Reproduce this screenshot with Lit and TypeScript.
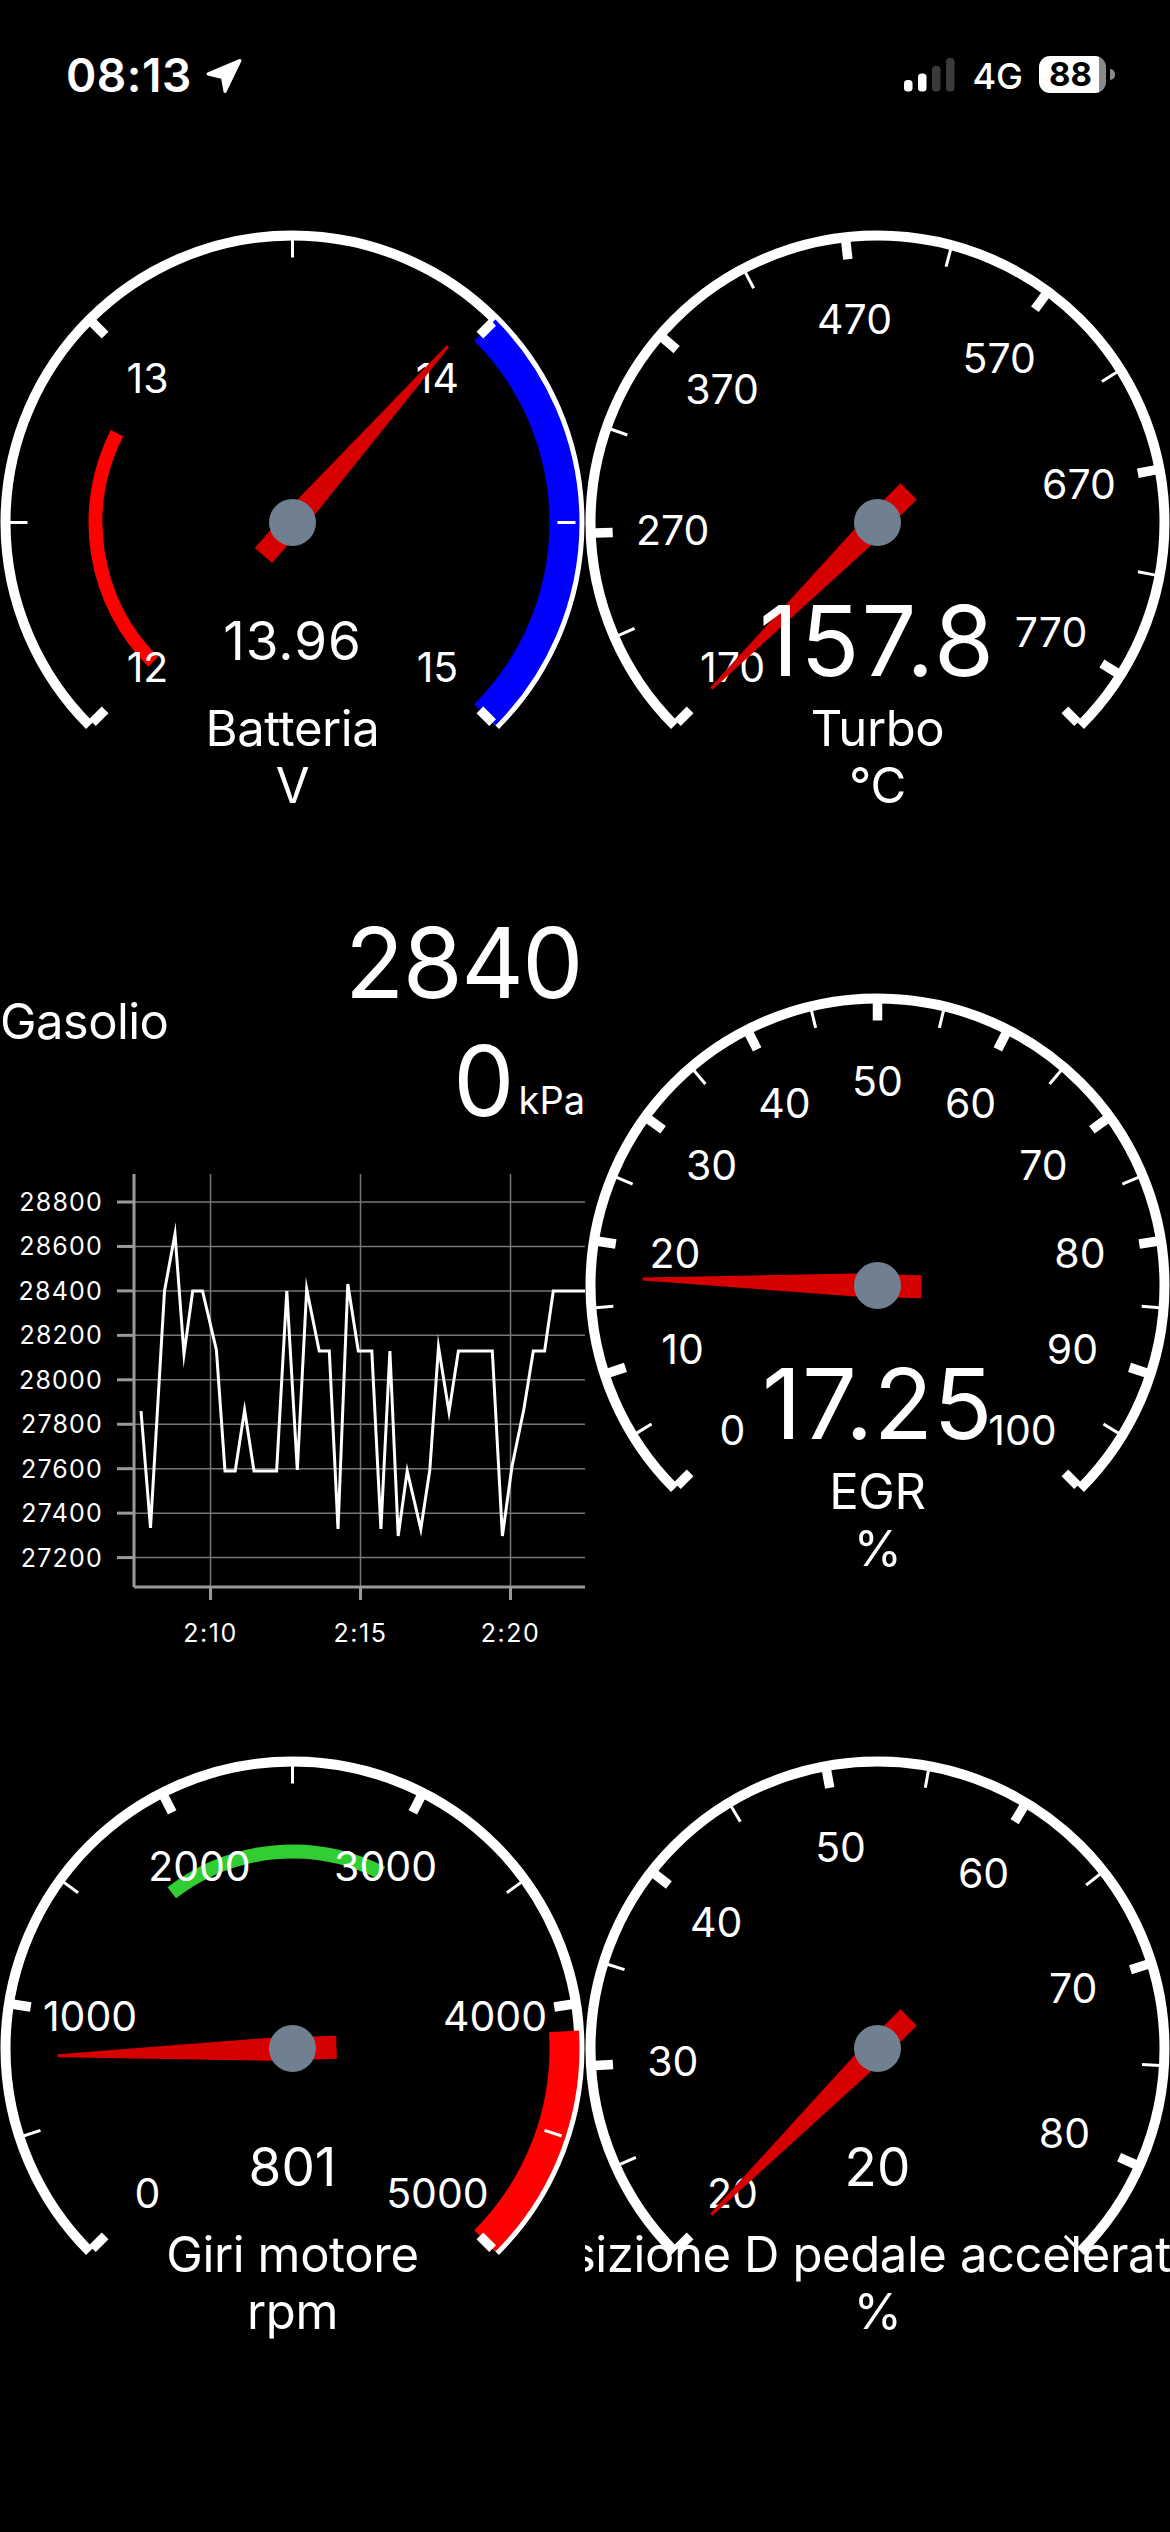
import { LitElement, html, svg, css } from 'lit';
import { customElement } from 'lit/decorators.js';

interface Zone {
  from: number;
  to: number;
  radius: number;
  width: number;
  color: string;
}

interface Gauge {
  title: string;
  unit: string;
  min: number;
  max: number;
  step: number;
  value: number;
  display: string;
  tracking?: number;
  big?: boolean;
  endTick?: boolean;
  zones?: Zone[];
}

const CX = 292.5;
const CY = 292.5;
const START = 135;
const SWEEP = 270;

const GAUGES: Gauge[] = [
  {
    title: 'Batteria',
    unit: 'V',
    min: 12,
    max: 15,
    step: 1,
    value: 13.96,
    display: '13.96',
    tracking: 1,
    zones: [
      { from: 12, to: 12.8, radius: 197, width: 14, color: '#ff0000' },
      { from: 14, to: 15, radius: 272, width: 30, color: '#0000ff' },
    ],
  },
  {
    title: 'Turbo',
    unit: '°C',
    min: 170,
    max: 800,
    step: 100,
    value: 170,
    display: '157.8',
    tracking: 2,
    big: true,
    endTick: true,
  },
  {
    title: 'EGR',
    unit: '%',
    min: 0,
    max: 100,
    step: 10,
    value: 17.25,
    display: '17.25',
    tracking: 0.5,
    big: true,
  },
  {
    title: 'Giri motore',
    unit: 'rpm',
    min: 0,
    max: 5000,
    step: 1000,
    value: 801,
    display: '801',
    zones: [
      { from: 1800, to: 3000, radius: 197, width: 14, color: '#32cd32' },
      { from: 4100, to: 5000, radius: 272, width: 30, color: '#ff0000' },
    ],
  },
  {
    title: 'Posizione D pedale acceleratore',
    unit: '%',
    min: 20,
    max: 85,
    step: 10,
    value: 20,
    display: '20',
  },
];

// fuel pressure samples, chart coordinates
const SAMPLES = [
  [141, 261], [150.5, 378], [164.5, 141], [175, 84], [184, 204], [192.7, 141], [202.5, 141],
  [216.4, 200], [225, 321], [235.2, 321], [244.6, 260], [254, 321], [276.6, 321], [286.8, 141],
  [297.3, 320], [306.7, 139], [319.2, 201], [329.3, 201], [338, 379], [347.8, 134], [358.3, 201],
  [371.8, 201], [380.9, 379], [389.9, 201], [398.2, 386], [407.2, 321], [420.8, 379], [429.8, 320],
  [438.5, 197], [449, 262], [458.4, 201], [492.3, 201], [502.4, 386], [511.9, 317], [523.9, 259],
  [533.3, 201], [544.6, 201], [553.3, 141], [590, 141],
];

const Y_TICKS = [28800, 28600, 28400, 28200, 28000, 27800, 27600, 27400, 27200];
const X_TICKS = [
  { x: 210.5, label: '2:10' },
  { x: 360.5, label: '2:15' },
  { x: 510.5, label: '2:20' },
];

function polar(angle: number, r: number) {
  const rad = (angle * Math.PI) / 180;
  return { x: CX + r * Math.cos(rad), y: CY + r * Math.sin(rad) };
}

function arcPath(from: number, to: number, r: number) {
  const a = polar(from, r);
  const b = polar(to, r);
  const large = to - from > 180 ? 1 : 0;
  return `M${a.x} ${a.y}A${r} ${r} 0 ${large} 1 ${b.x} ${b.y}`;
}

function renderGauge(g: Gauge) {
  const angleOf = (v: number) => START + ((v - g.min) / (g.max - g.min)) * SWEEP;
  const majors: number[] = [];
  const minors: number[] = [];
  for (let v = g.min; v <= g.max; v += g.step) {
    majors.push(v);
    if (v + g.step / 2 <= g.max) minors.push(v + g.step / 2);
  }
  const tick = (angle: number, cls: string) => {
    const a = polar(angle, 283);
    const b = polar(angle, 265);
    return svg`<line class=${cls} x1=${a.x} y1=${a.y} x2=${b.x} y2=${b.y}></line>`;
  };
  const needle = angleOf(g.value);

  return html`
    <svg class="gauge" width="585" height="600" viewBox="0 0 585 600">
      <path class="ring" d=${arcPath(START, START + SWEEP, 287)}></path>
      ${(g.zones ?? []).map(
        (z) => svg`<path
          d=${arcPath(angleOf(z.from), angleOf(z.to), z.radius)}
          fill="none"
          stroke=${z.color}
          stroke-width=${z.width}
        ></path>`
      )}
      ${minors.map((v) => tick(angleOf(v), 'minor'))}
      ${majors.map((v) => tick(angleOf(v), 'major'))}
      ${g.endTick ? tick(START + SWEEP, 'major') : ''}
      ${majors.map((v) => {
        const p = polar(angleOf(v), 205);
        return svg`<text class="scale" x=${p.x} y=${p.y + 15}>${v}</text>`;
      })}
      <g transform="rotate(${needle} ${CX} ${CY})">
        <polygon
          class="needle"
          points="${CX - 44},${CY - 11.5} ${CX + 22},${CY - 11.5} ${CX + 235},${CY - 1.5} ${CX + 235},${CY + 1.5} ${CX + 22},${CY + 11.5} ${CX - 44},${CY + 11.5}"
        ></polygon>
      </g>
      <circle class="hub" cx=${CX} cy=${CY} r="23.5"></circle>
      <text
        class=${g.big ? 'value big' : 'value'}
        letter-spacing=${g.tracking ?? 0}
        x=${CX}
        y=${CY + (g.big ? 153 : 137)}
      >${g.display}</text>
      <text class="caption" x=${CX} y=${CY + 223}>${g.title}</text>
      <text class="caption" x=${CX} y=${CY + 280.5}>${g.unit}</text>
    </svg>
  `;
}

function renderChart() {
  const yOf = (i: number) => 52 + i * 44.45;
  return html`
    <svg class="chart" width="585" height="510" viewBox="0 0 585 510">
      ${Y_TICKS.map(
        (t, i) => svg`
          <line class="grid" x1="134" x2="585" y1=${yOf(i)} y2=${yOf(i)}></line>
          <line class="axis" x1="117" x2="134" y1=${yOf(i)} y2=${yOf(i)}></line>
          <text class="y-label" x="103" y=${yOf(i) + 9}>${t}</text>
        `
      )}
      ${X_TICKS.map(
        (t) => svg`
          <line class="grid" x1=${t.x} x2=${t.x} y1="24" y2="437"></line>
          <line class="axis" x1=${t.x} x2=${t.x} y1="437" y2="450"></line>
          <text class="x-label" x=${t.x} y="492">${t.label}</text>
        `
      )}
      <line class="axis" x1="134" x2="134" y1="24" y2="437"></line>
      <line class="axis" x1="134" x2="585" y1="437" y2="437"></line>
      <polyline class="trace" points=${SAMPLES.map((p) => p.join(',')).join(' ')}></polyline>
    </svg>
  `;
}

@customElement('app-root')
export class AppRoot extends LitElement {
  static styles = css`
    :host {
      display: block;
      width: 1170px;
      height: 2532px;
      overflow: hidden;
      background: #000;
      color: #fff;
      font-family: Inter, 'Liberation Sans', Arial, sans-serif;
    }

    .status {
      height: 230px;
      box-sizing: border-box;
      padding: 55px 55px 0 66px;
      display: flex;
      justify-content: space-between;
      align-items: flex-start;
    }

    .status-left,
    .status-right {
      display: flex;
      align-items: center;
      height: 38px;
    }

    .clock {
      font-size: 46px;
      font-weight: 600;
      line-height: 38px;
      letter-spacing: 0.5px;
      margin-top: 2px;
    }

    .arrow {
      margin-left: 13px;
      margin-top: 4px;
    }

    .bars {
      display: block;
      margin-right: 17px;
      margin-top: 1px;
    }

    .network {
      font-size: 36px;
      font-weight: 500;
      line-height: 38px;
      margin-right: 16px;
      margin-top: 4px;
    }

    .battery {
      width: 67px;
      height: 37px;
      border-radius: 11px;
      background: linear-gradient(90deg, #fff 90%, #8a8a8a 90%);
      color: #000;
      font-size: 33px;
      font-weight: 700;
      line-height: 37px;
      text-indent: 10px;
    }

    .battery-cap {
      width: 5px;
      height: 11px;
      margin-left: 4px;
      margin-top: 1px;
      border-radius: 0 6px 6px 0;
      background: #8a8a8a;
    }

    .row {
      display: flex;
      width: 1170px;
    }

    .row-top {
      margin-bottom: 63px;
    }

    .row-mid {
      height: 863px;
    }

    .row-mid .gauge {
      margin-top: 100px;
    }

    .gauge,
    .chart {
      display: block;
      flex: none;
    }

    .panel {
      width: 585px;
      flex: none;
    }

    .panel-head {
      height: 257px;
      display: flex;
      justify-content: space-between;
      align-items: flex-start;
    }

    .panel-name {
      margin-top: 100px;
      font-size: 49px;
      line-height: 58px;
      letter-spacing: -0.6px;
    }

    .panel-values {
      padding-top: 11px;
      text-align: right;
      font-size: 97px;
      line-height: 118px;
    }

    .panel-top {
      letter-spacing: -1.5px;
      padding-right: 3px;
    }

    .panel-unit {
      font-size: 38px;
      vertical-align: 2px;
      margin-left: 4px;
    }

    .ring {
      fill: none;
      stroke: #fff;
      stroke-width: 10;
    }

    .major {
      stroke: #fff;
      stroke-width: 9.5;
    }

    .minor {
      stroke: #fff;
      stroke-width: 3;
    }

    .scale {
      fill: #fff;
      font-size: 41px;
      text-anchor: middle;
    }

    .needle {
      fill: #d60000;
    }

    .hub {
      fill: #708090;
    }

    .value {
      fill: #fff;
      font-size: 53px;
      text-anchor: middle;
    }

    .value.big {
      font-size: 97px;
    }

    .caption {
      fill: #fff;
      font-size: 49px;
      letter-spacing: -0.4px;
      text-anchor: middle;
    }

    .grid {
      stroke: #777;
      stroke-width: 1.5;
    }

    .axis {
      stroke: #999;
      stroke-width: 3;
    }

    .trace {
      fill: none;
      stroke: #fff;
      stroke-width: 3;
      stroke-linejoin: miter;
      stroke-miterlimit: 10;
    }

    .y-label,
    .x-label {
      fill: #fff;
      font-size: 25px;
      letter-spacing: 1.2px;
    }

    .y-label {
      text-anchor: end;
    }

    .x-label {
      letter-spacing: 1.5px;
      text-anchor: middle;
    }
  `;

  render() {
    return html`
      <div class="status">
        <div class="status-left">
          <span class="clock">08:13</span>
          <svg class="arrow" width="38" height="36" viewBox="0 0 38 36">
            <path
              fill="#fff"
              stroke="#fff"
              stroke-width="3"
              stroke-linejoin="round"
              d="M35 2.500 3 16l14.500 3.500 2.500 14z"
            ></path>
          </svg>
        </div>
        <div class="status-right">
          <svg class="bars" width="51" height="34" viewBox="0 0 51 34">
            <rect x="0" y="22" width="8.500" height="11.500" rx="3.500" fill="#fff"></rect>
            <rect x="14" y="15.500" width="8.500" height="18" rx="3.500" fill="#fff"></rect>
            <rect x="28" y="8" width="8.500" height="25.500" rx="3.500" fill="#3a3a3a"></rect>
            <rect x="42" y="0" width="8.500" height="33.500" rx="3.500" fill="#3a3a3a"></rect>
          </svg>
          <span class="network">4G</span>
          <span class="battery">88</span>
          <span class="battery-cap"></span>
        </div>
      </div>

      <div class="row row-top">${renderGauge(GAUGES[0])} ${renderGauge(GAUGES[1])}</div>

      <div class="row row-mid">
        <div class="panel">
          <div class="panel-head">
            <div class="panel-name">Gasolio</div>
            <div class="panel-values">
              <div class="panel-top">2840</div>
              <div>0<span class="panel-unit">kPa</span></div>
            </div>
          </div>
          ${renderChart()}
        </div>
        ${renderGauge(GAUGES[2])}
      </div>

      <div class="row">${renderGauge(GAUGES[3])} ${renderGauge(GAUGES[4])}</div>
    `;
  }
}
